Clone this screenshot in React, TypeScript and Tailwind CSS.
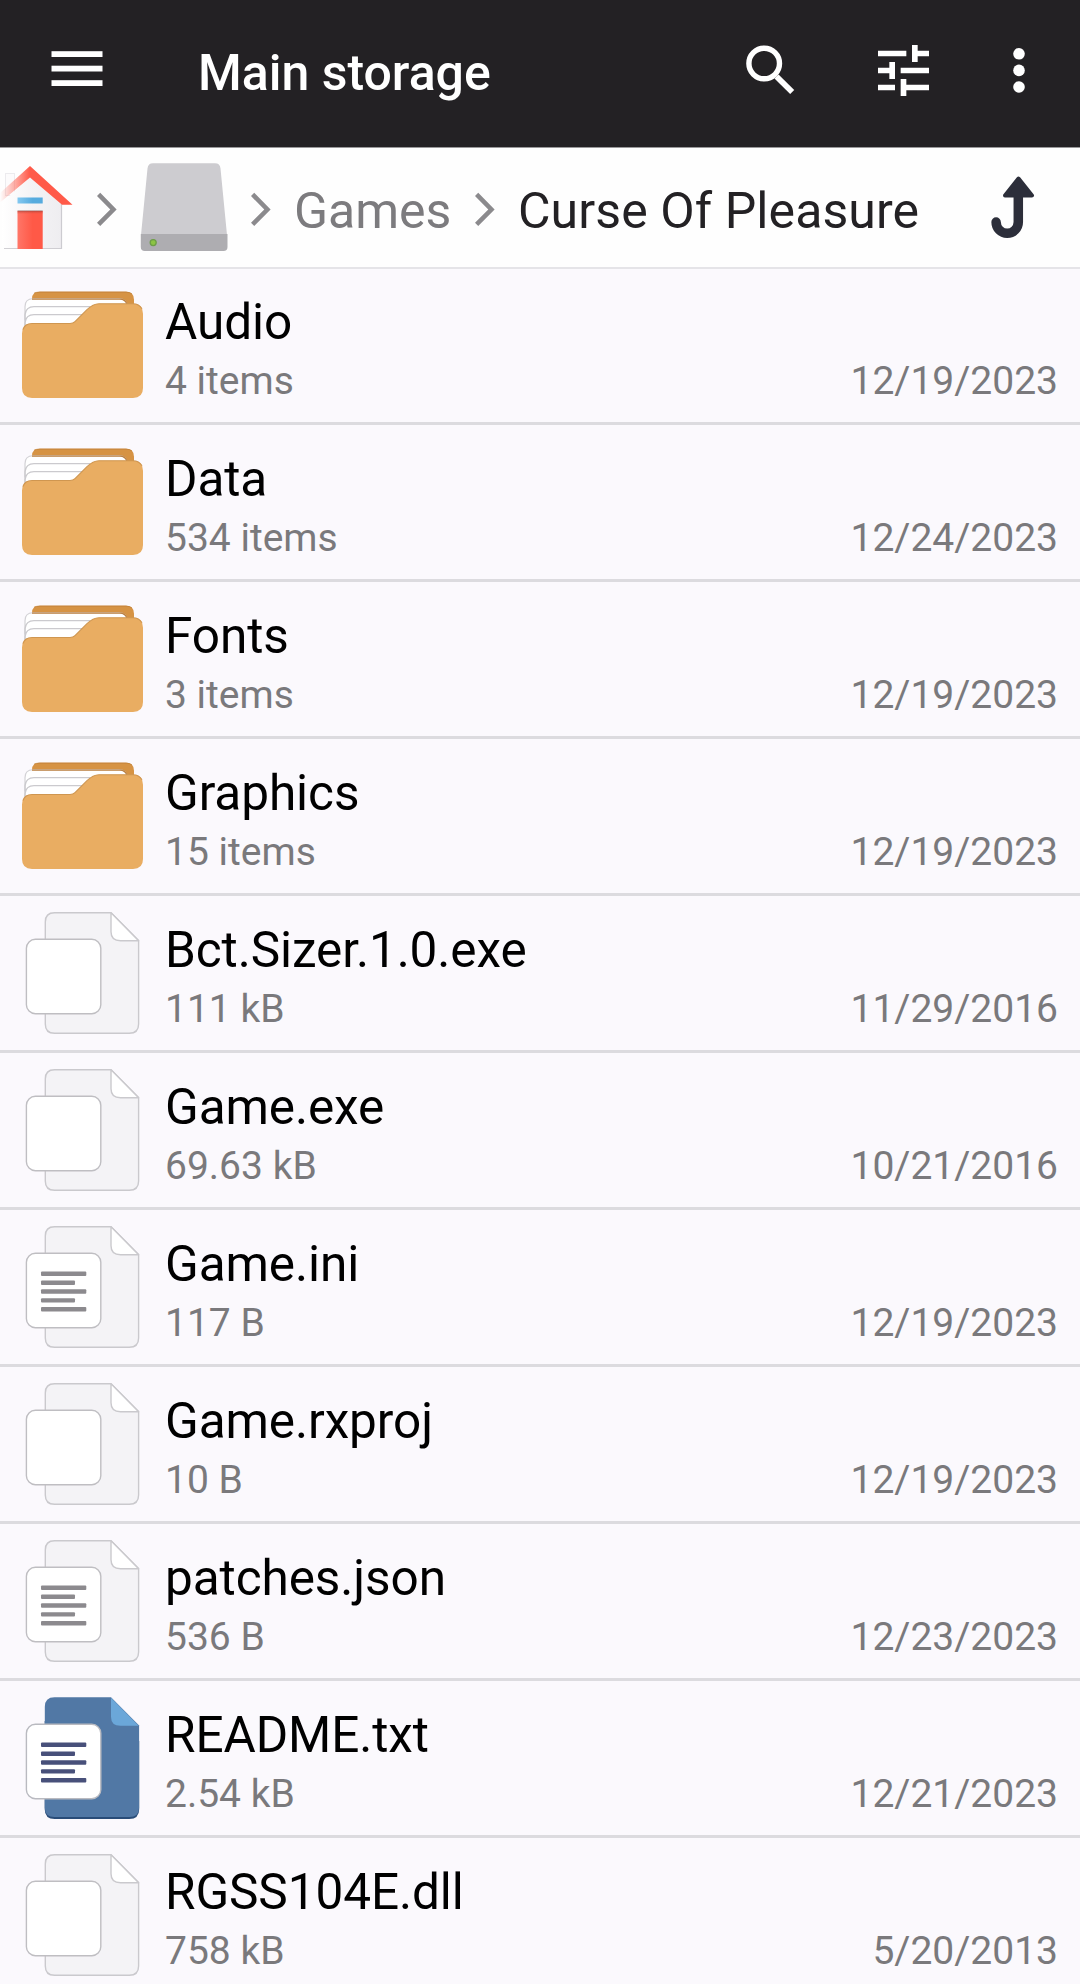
type Kind = 'folder' | 'blank' | 'text' | 'readme';

const entries: { name: string; info: string; date: string; kind: Kind }[] = [
  { name: 'Audio', info: '4 items', date: '12/19/2023', kind: 'folder' },
  { name: 'Data', info: '534 items', date: '12/24/2023', kind: 'folder' },
  { name: 'Fonts', info: '3 items', date: '12/19/2023', kind: 'folder' },
  { name: 'Graphics', info: '15 items', date: '12/19/2023', kind: 'folder' },
  { name: 'Bct.Sizer.1.0.exe', info: '111 kB', date: '11/29/2016', kind: 'blank' },
  { name: 'Game.exe', info: '69.63 kB', date: '10/21/2016', kind: 'blank' },
  { name: 'Game.ini', info: '117 B', date: '12/19/2023', kind: 'text' },
  { name: 'Game.rxproj', info: '10 B', date: '12/19/2023', kind: 'blank' },
  { name: 'patches.json', info: '536 B', date: '12/23/2023', kind: 'text' },
  { name: 'README.txt', info: '2.54 kB', date: '12/21/2023', kind: 'readme' },
  { name: 'RGSS104E.dll', info: '758 kB', date: '5/20/2013', kind: 'blank' },
];

function FolderIcon() {
  return (
    <svg className="h-[154px] w-[165px] shrink-0" viewBox="0 0 165 154">
      <g transform="translate(0 1) scale(1 0.992)">
        <path d="M32 60V30q0-7 8-7h86q8 0 8 8v30z" fill="#d69344" />
        <path d="M34 24.500q2-1.200 6-1.200h86q4 0 6 2" fill="none" stroke="#c5853b" strokeWidth="1" />
        <path d="M25 66V38q0-8 8-8h86q8 0 8 8v28z" fill="#fff" stroke="#d3d2d6" strokeWidth="1.200" />
        <path d="M32 30.300h88q5 0 7 5" fill="none" stroke="#bc8040" strokeWidth="1.200" />
        <path d="M25 52V46q1-8 9-8h56M25 60V54q1-8 9-8h54" fill="none" stroke="#cbcace" strokeWidth="1.300" />
        <path d="M22 65q0-10 10-10h38q3 0 5-2l12-12q6-6 12-6h34q10 0 10 10v75q0 10-10 10H32q-10 0-10-10z" fill="#e9ad62" />
        <path d="M23 61q2-6 9-6h38q3 0 5-2l12-12q6-6 12-6h34q6 0 9 5" fill="none" stroke="#cf9650" strokeWidth="1.100" />
      </g>
    </svg>
  );
}

function FileIcon({ kind }: { kind: Kind }) {
  const blue = kind === 'readme';
  const line = blue ? '#48507a' : '#8c8a8e';
  return (
    <svg className="h-[154px] w-[165px] shrink-0" viewBox="0 0 165 154">
      {blue ? (
        <>
          <path d="M44.700 40V128q0 10 10 10h74.500q10 0 10-10V60z" fill="#294c78" />
          <path d="M44.800 26q0-9.700 9.700-9.700h56.500L139.100 44.500V126.500q0 9.500-9.800 9.500H54.500q-9.700 0-9.700-9.500z" fill="#5178a5" />
        </>
      ) : (
        <path d="M45.300 26q0-9.200 9.200-9.200h56.500L138.600 44.500V128q0 9.300-9.300 9.300H54.500q-9.200 0-9.200-9.300z" fill="#f4f3f6" stroke="#cac9cd" strokeWidth="1.400" />
      )}
      <path d="M111 16.800L138.600 44.700H120.500q-9.500 0-9.500-9z" fill={blue ? '#6ba7d9' : '#fff'} stroke={blue ? 'none' : '#cac9cd'} strokeWidth="1.400" strokeLinejoin="round" />
      <rect x="26.400" y="43.300" width="74.400" height="74.400" rx="9" fill="#fff" stroke={blue ? '#b9bac0' : '#bfbec2'} strokeWidth="1.400" />
      {(kind === 'text' || blue) && (
        <g fill={line}>
          <rect x="41" y="61.600" width="45.300" height="4.400" rx="1" />
          <rect x="41" y="70.500" width="34" height="4.400" rx="1" />
          <rect x="41" y="79.300" width="45.300" height="4.400" rx="1" />
          <rect x="41" y="88.200" width="34" height="4.400" rx="1" />
          <rect x="41" y="97" width="45.300" height="4.400" rx="1" />
        </g>
      )}
    </svg>
  );
}

function Chevron({ className }: { className: string }) {
  return (
    <svg className={`h-[36px] w-[20px] shrink-0 ${className}`} viewBox="0 0 20 36">
      <path d="M1.600 3.400L16.400 18.500L1.600 33.400" fill="none" stroke="#8b8a8d" strokeWidth="4.600" />
    </svg>
  );
}

function HomeIcon() {
  return (
    <svg className="h-[88px] w-[74px] shrink-0" viewBox="0 0 74 88">
      <defs>
        <linearGradient id="roof" gradientUnits="userSpaceOnUse" x1="0" x2="30" y1="0" y2="0">
          <stop offset="0" stopColor="#ff5a49" stopOpacity="0" />
          <stop offset="1" stopColor="#ff5a49" />
        </linearGradient>
        <linearGradient id="wall" gradientUnits="userSpaceOnUse" x1="2" x2="62" y1="0" y2="0">
          <stop offset="0" stopColor="#fff" />
          <stop offset="0.500" stopColor="#f4f3f5" />
          <stop offset="1" stopColor="#eeedf0" />
        </linearGradient>
        <linearGradient id="door" x1="0" x2="1" y1="0" y2="0">
          <stop offset="0" stopColor="#ff7668" />
          <stop offset="0.600" stopColor="#ff5947" />
        </linearGradient>
        <linearGradient id="lamp" x1="0" x2="1" y1="0" y2="0">
          <stop offset="0" stopColor="#83c8f0" />
          <stop offset="0.600" stopColor="#56abde" />
        </linearGradient>
        <linearGradient id="shade" x1="0" x2="0" y1="0" y2="1">
          <stop offset="0" stopColor="#7d3a35" stopOpacity="0.700" />
          <stop offset="1" stopColor="#ff5947" stopOpacity="0" />
        </linearGradient>
      </defs>
      <rect x="5.500" y="10.500" width="9" height="22" fill="#fcfbfc" stroke="#ecebee" />
      <path d="M2 40L30 14L62 42V85.500H2z" fill="url(#wall)" />
      <path d="M61.500 41V85.500H4" fill="none" stroke="#bdbcc2" strokeOpacity="0.700" strokeWidth="1.200" />
      <path d="M30 3L72.500 41.800H62L30 14.500L0 39.500V30z" fill="url(#roof)" />
      <rect x="17.500" y="34.500" width="25.200" height="6" fill="url(#lamp)" />
      <rect x="17.500" y="48" width="25.200" height="38" fill="url(#door)" />
      <rect x="17.500" y="47.500" width="25.200" height="4" fill="url(#shade)" />
    </svg>
  );
}

function DriveIcon() {
  return (
    <svg className="ml-[26px] h-[90px] w-[88px] shrink-0" viewBox="0 0 88 90">
      <path d="M1 73L7.500 6.500Q8 1.200 13 1.200H75Q80 1.200 80.500 6.500L87 73z" fill="#cdccd0" />
      <path d="M.800 72H87.500V85q0 4-4 4H4.800q-4 0-4-4z" fill="#aeadb1" />
      <circle cx="13.200" cy="80.600" r="3" fill="#8cc443" stroke="#6d9d48" strokeWidth="1.300" />
    </svg>
  );
}

export default function App() {
  return (
    <div className="flex h-[1984px] w-[1080px] flex-col overflow-hidden bg-[#fbf9fd] font-['Roboto',sans-serif]">
      <header className="flex h-[148px] shrink-0 items-start border-b border-[#99989a] bg-[#232124] text-white">
        <svg className="mt-[50px] ml-[51px] h-[38px] w-[52px]" viewBox="0 0 52 38" fill="#fff">
          <rect x="0.500" y="1.200" width="51" height="5.800" />
          <rect x="0.500" y="15.700" width="51" height="5.800" />
          <rect x="0.500" y="30.200" width="51" height="5.800" />
        </svg>
        <h1 className="mt-[43px] ml-[95px] w-[542px] text-[50px] leading-[60px] font-medium whitespace-nowrap">Main storage</h1>
        <svg className="mt-[45px] ml-[5px] h-[50px] w-[50px]" viewBox="0 0 50 50" fill="none" stroke="#fff">
          <circle cx="19.200" cy="18.500" r="15.300" strokeWidth="5.400" />
          <path d="M31.500 31.500L47.200 47" strokeWidth="5.800" />
        </svg>
        <svg className="mt-[45px] ml-[82.500px] h-[51px] w-[51px]" viewBox="3 3 18 18" fill="#fff">
          <path d="M3 17v2h6v-2H3zM3 5v2h10V5H3zm10 16v-2h8v-2h-8v-2h-2v6h2zM7 9v2H3v2h4v2h2V9H7zm14 4v-2H11v2h10zm-6-4h2V7h4V5h-4V3h-2v6z" />
        </svg>
        <svg className="mt-[47px] ml-[83px] h-[47px] w-[14px]" viewBox="0 0 14 47" fill="#fff">
          <circle cx="7" cy="6.800" r="5.800" />
          <circle cx="7" cy="23.400" r="5.800" />
          <circle cx="7" cy="40" r="5.800" />
        </svg>
      </header>

      <nav className="flex h-[121px] shrink-0 items-start border-b-2 border-[#e5e4e8] bg-[#fefefe] text-[50px] leading-[60px] whitespace-nowrap">
        <div className="flex w-[228px] shrink-0 items-start">
          <div className="mt-[15px] flex"><HomeIcon /></div>
          <Chevron className="mt-[43px] ml-[23px]" />
          <div className="mt-[14px] -ml-[3px] flex"><DriveIcon /></div>
        </div>
        <Chevron className="mt-[43px] ml-[23px]" />
        <span className="mt-[33px] ml-[23px] w-[159px] shrink-0 text-[#7c7b7e]">Games</span>
        <Chevron className="mt-[43px] ml-[22px]" />
        <span className="mt-[33px] ml-[23px] w-[402px] shrink-0 tracking-[0.08px] text-[#232124]">Curse Of Pleasure</span>
        <svg className="mt-[26px] ml-[70px] h-[66px] w-[46px] shrink-0" viewBox="0 0 46 66">
          <path d="M28.300 20V48a11.100 11.300 0 0 1-22.200 0" fill="none" stroke="#2c2e3a" strokeWidth="9.500" strokeLinecap="round" />
          <path d="M28.500 4.500L42 21.500H15z" fill="#2c2e3a" stroke="#2c2e3a" strokeWidth="4" strokeLinejoin="round" />
        </svg>
      </nav>

      <main className="-mt-px">
        {entries.map((e) => (
          <div key={e.name} className="flex h-[157px] border-b-[3px] border-[#dcdbdf]">
            {e.kind === 'folder' ? <FolderIcon /> : <FileIcon kind={e.kind} />}
            <div className="flex-1 pt-[24px] pr-[22px] whitespace-nowrap">
              <div className="text-[49.5px] leading-[60px] tracking-[-0.08px] text-black">{e.name}</div>
              <div className="mt-[5px] flex justify-between text-[39px] leading-[48px] text-[#7a797c]">
                <span>{e.info}</span>
                <span>{e.date}</span>
              </div>
            </div>
          </div>
        ))}
      </main>
    </div>
  );
}
